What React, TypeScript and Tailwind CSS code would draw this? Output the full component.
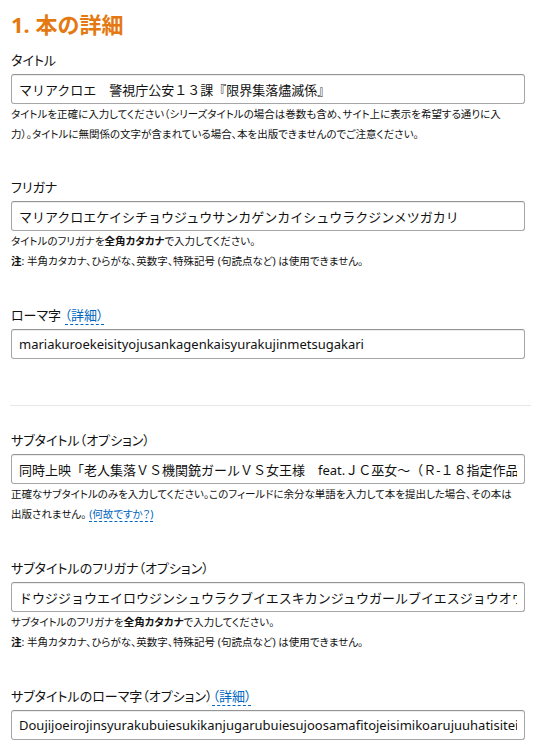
import React from "react";

const jp = "[font-family:'Noto_Sans','Noto_Sans_CJK_JP',sans-serif]";

function Label({ children }: { children: React.ReactNode }) {
  return (
    <div className="text-[13px] leading-[18px] text-[#111] [font-feature-settings:'palt']">
      {children}
    </div>
  );
}

function Field({ value }: { value: string }) {
  return (
    <input
      readOnly
      value={value}
      className="mt-[5px] block h-[30px] w-[514px] rounded-[3px] border border-[#a6a6a6] border-t-[#949494] bg-white px-[7px] text-[13px] text-[#111] shadow-[inset_0_1px_0_rgba(0,0,0,0.07)] outline-none"
    />
  );
}

function Help({ children }: { children: React.ReactNode }) {
  return (
    <div className="text-[10.5px] leading-[20px] text-[#111] [font-feature-settings:'palt'] whitespace-nowrap">
      {children}
    </div>
  );
}

function DLink({ children }: { children: React.ReactNode }) {
  return (
    <span className="text-[#0066c0] border-b border-dashed border-[#0066c0]">{children}</span>
  );
}

export default function App() {
  return (
    <div className={`w-[543px] min-h-[748px] bg-white pl-[11px] pt-[10px] ${jp}`}>
      <h1 className="text-[22px] leading-[28px] font-bold text-[#e47911]">1. 本の詳細</h1>

      <div className="mt-[13px]">
        <Label>タイトル</Label>
        <Field value="マリアクロエ　警視庁公安１３課『限界集落燼滅係』" />
        <Help>
          タイトルを正確に入力してください（シリーズタイトルの場合は巻数も含め、サイト上に表示を希望する通りに入
          <br />
          力）。タイトルに無関係の文字が含まれている場合、本を出版できませんのでご注意ください。
        </Help>
      </div>

      <div className="mt-[34px]">
        <Label>フリガナ</Label>
        <Field value="マリアクロエケイシチョウジュウサンカゲンカイシュウラクジンメツガカリ" />
        <Help>
          タイトルのフリガナを<b className="font-bold">全角カタカナ</b>で入力してください。
          <br />
          <b className="font-bold">注</b>: 半角カタカナ、ひらがな、英数字、特殊記号 (句読点など) は使用できません。
        </Help>
      </div>

      <div className="mt-[35px]">
        <Label>
          ローマ字 <DLink>（詳細）</DLink>
        </Label>
        <Field value="mariakuroekeisityojusankagenkaisyurakujinmetsugakari" />
      </div>

      <div className="mt-[46px] -ml-px h-px w-[521px] bg-[#e7e7e7]" />

      <div className="mt-[25px]">
        <Label>サブタイトル（オプション）</Label>
        <Field value="同時上映「老人集落ＶＳ機関銃ガールＶＳ女王様　feat.ＪＣ巫女～（Ｒ-１８指定作品）」" />
        <Help>
          正確なサブタイトルのみを入力してください。このフィールドに余分な単語を入力して本を提出した場合、その本は
          <br />
          出版されません。 <DLink>(何故ですか？)</DLink>
        </Help>
      </div>

      <div className="mt-[35px]">
        <Label>サブタイトルのフリガナ（オプション）</Label>
        <Field value="ドウジジョウエイロウジンシュウラクブイエスキカンジュウガールブイエスジョウオウサマフィーチャリングジェイシーミコアールジュウハチシテイサクヒン" />
        <Help>
          サブタイトルのフリガナを<b className="font-bold">全角カタカナ</b>で入力してください。
          <br />
          <b className="font-bold">注</b>: 半角カタカナ、ひらがな、英数字、特殊記号 (句読点など) は使用できません。
        </Help>
      </div>

      <div className="mt-[35px]">
        <Label>
          サブタイトルのローマ字（オプション）<DLink>（詳細）</DLink>
        </Label>
        <Field value="Doujijoeirojinsyurakubuiesukikanjugarubuiesujoosamafitojeisimikoarujuuhatisiteisakuhin" />
      </div>
    </div>
  );
}
